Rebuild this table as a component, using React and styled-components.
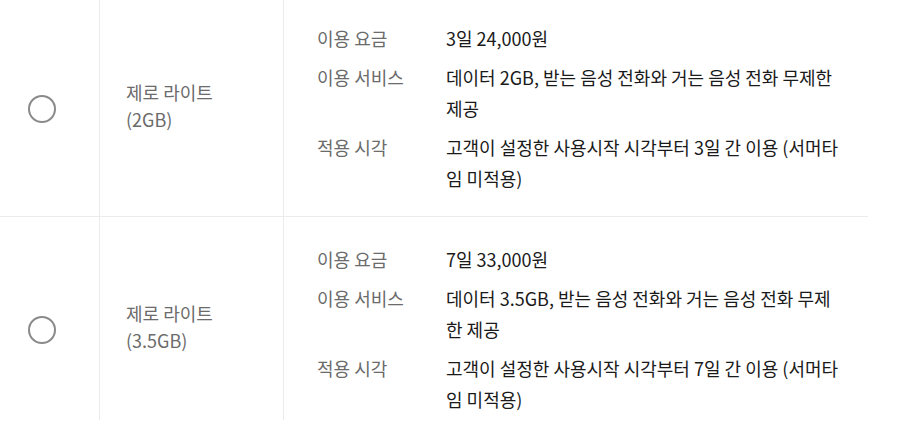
import React from 'react'
import styled, { createGlobalStyle } from 'styled-components'

const GlobalStyle = createGlobalStyle`
  body {
    margin: 0;
    background: #fff;
    font-family: 'Noto Sans CJK KR', 'Noto Sans', sans-serif;
  }
`

const Viewport = styled('div')`
  width: 868px;
  height: 420px;
  overflow: hidden;
`

const Table = styled('div')`
  margin-top: -4px;
`

const Row = styled('div')`
  display: grid;
  grid-template-columns: 100px 184px 1fr;
  border-bottom: 1px solid #ececec;
`

const RadioCell = styled('div')`
  display: flex;
  align-items: center;
  padding-left: 28px;
  border-right: 1px solid #ececec;
`

const Radio = styled('span')`
  box-sizing: border-box;
  width: 28px;
  height: 28px;
  margin-top: 6px;
  border: 2px solid #8a8a8a;
  border-radius: 50%;
  background: #fff;
`

const NameCell = styled('div')`
  display: flex;
  align-items: center;
  padding-left: 26px;
  border-right: 1px solid #ececec;
  font-size: 18px;
  line-height: 27px;
  color: #6b6b6b;
`

const DetailCell = styled('dl')`
  margin: 0;
  padding: 27px 26px 22px 33px;
  display: flex;
  flex-direction: column;
  gap: 8px;
`

const Item = styled('div')`
  display: grid;
  grid-template-columns: 129px 1fr;
  font-size: 18px;
  line-height: 31px;
`

const Label = styled('dt')`
  color: #6b6b6b;
`

const Value = styled('dd')`
  margin: 0;
  color: #1a1a1a;
`

const plans = [
  { name: '제로 라이트', size: '(2GB)', days: 3, price: '24,000', data: '2GB' },
  { name: '제로 라이트', size: '(3.5GB)', days: 7, price: '33,000', data: '3.5GB' },
]

const App = () => {
  return (
    <>
      <GlobalStyle />
      <Viewport>
        <Table>
          {plans.map((p) => (
            <Row key={p.size}>
              <RadioCell>
                <Radio />
              </RadioCell>
              <NameCell>
                <div>
                  {p.name}
                  <br />
                  {p.size}
                </div>
              </NameCell>
              <DetailCell>
                <Item>
                  <Label>이용 요금</Label>
                  <Value>{p.days}일 {p.price}원</Value>
                </Item>
                <Item>
                  <Label>이용 서비스</Label>
                  <Value>데이터 {p.data}, 받는 음성 전화와 거는 음성 전화 무제한 제공</Value>
                </Item>
                <Item>
                  <Label>적용 시각</Label>
                  <Value>고객이 설정한 사용시작 시각부터 {p.days}일 간 이용 (서머타임 미적용)</Value>
                </Item>
              </DetailCell>
            </Row>
          ))}
        </Table>
      </Viewport>
    </>
  )
}

export default App
